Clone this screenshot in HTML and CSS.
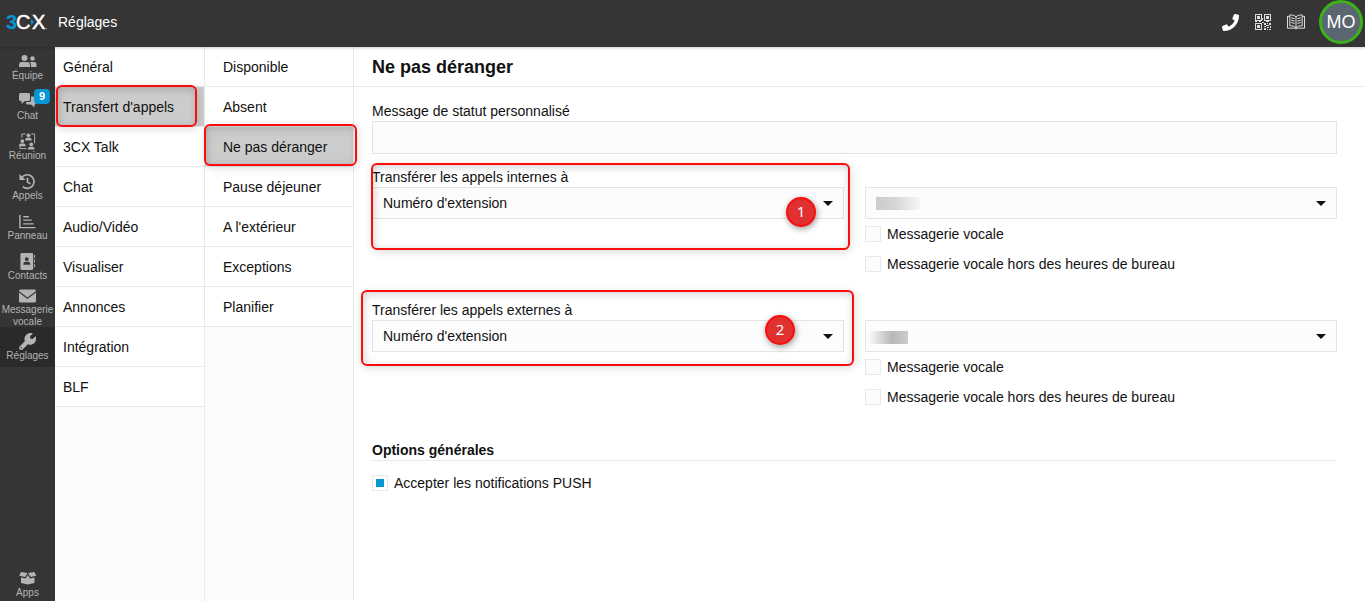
FILE: index.html
```html
<!DOCTYPE html>
<html lang="fr">
<head>
<meta charset="utf-8">
<title>3CX – Réglages</title>
<link rel="stylesheet" href="styles.css">
</head>
<body>
<div class="app">
  <header class="topbar">
    <svg class="logo" viewBox="0 0 44 32" role="img" aria-label="3CX">
      <text class="logo-3" x="0" y="23">3</text>
      <text class="logo-c" x="10" y="23">C</text>
      <text class="logo-c" x="26" y="23">X</text>
      <path d="M25 13l3 3-3 3z" fill="#0596d4"/>
      <rect x="40" y="22" width="1" height="1" fill="#aaa"/>
    </svg>
    <span class="topbar-title">Réglages</span>
    <div class="topbar-actions">
      <button class="icon-button" type="button" aria-label="Téléphone">
        <svg width="17" height="17" viewBox="0 0 512 512" fill="#fff"><path d="M493 25L389 1c-11-3-23 3-27 14l-48 112c-4 10-1 21 7 28l60 50c-36 76-98 139-176 176l-50-60c-7-8-18-11-28-7L15 362c-11 4-17 16-14 27l24 104c3 11 12 19 24 19 256 0 463-207 463-463 0-12-8-21-19-24z"/></svg>
      </button>
      <button class="icon-button" type="button" aria-label="Code QR">
        <svg width="16" height="16" viewBox="0 0 16 16" fill="#ddd"><path fill-rule="evenodd" d="M0 0h7v7H0zM1 1v5h5V1zM9 0h7v7H9zM10 1v5h5V1zM0 9h7v7H0zM1 10v5h5v-5z"/><path d="M2 2h3v3H2zM11 2h3v3h-3zM2 11h3v3H2zM9 9h2v2H9zM12 9h1v1h-1zM14 9h2v2h-2zM11 11h3v1h-3zM9 12h2v1H9zM12 13h2v1h-2zM15 12h1v2h-1zM9 14h2v2H9zM12 15h1v1h-1zM14 15h2v1h-2zM7 4h1v2H7zM7 8h2v1H7zM4 7h2v1H4zM0 7h2v1H0zM11 7h3v1h-3z"/></svg>
      </button>
      <button class="icon-button" type="button" aria-label="Annuaire">
        <svg width="18" height="16" viewBox="0 0 19 16" fill="none" stroke="#eee"><path d="M2.500 2H.5v12.500h7.500l1.500 1 1.500-1h7.500V2h-2M9.500 2.500C8 1 5.500.5 3 .5v11.500c2.500 0 5 .5 6.500 2C11 12.500 13.500 12 16 12V.5c-2.500 0-5 .5-6.500 2zV14"/><path d="M4.500 3.500l3.500 1M4.500 6l3.500 1M4.500 8.500l3.500 1M14.500 3.500L11 4.500M14.500 6L11 7M14.500 8.500L11 9.500"/></svg>
      </button>
      <button class="avatar" type="button">MO</button>
    </div>
  </header>

  <div class="body">
    <nav class="rail" aria-label="Navigation">
      <a class="rail-item" href="#">
        <svg width="18" height="14" viewBox="0 0 18 14"><circle cx="5.500" cy="4" r="3"/><circle cx="13.500" cy="4.500" r="2.300"/><path d="M0 13v-2q0-3 3-3h5q3 0 3 3v2zM12 13v-2q0-2-1.200-3H15q2.500 0 2.500 2.500V13z"/></svg>
        <span>Équipe</span>
      </a>
      <a class="rail-item" href="#">
        <svg width="18" height="15" viewBox="0 0 18 15"><path d="M1.500 0h8Q11 0 11 1.500v5Q11 8 9.500 8H6L2.500 11V8H1.500Q0 8 0 6.500v-5Q0 0 1.500 0z"/><path d="M12 3.500h3.500Q17 3.500 17 5v5q0 1.500-1.500 1.500V14.500l-3.500-3H8.500Q7 11.500 7 10V9h3.500Q12 9 12 7.500z"/></svg>
        <span>Chat</span>
        <span class="badge">9</span>
      </a>
      <a class="rail-item" href="#">
        <svg class="tall" width="17" height="17" viewBox="0 0 18 18"><path d="M7 1h-4v4M13 1h3.500v10M1 13v3.500h7" fill="none" stroke="#b4b4b4"/><circle cx="10" cy="2.500" r="2"/><path d="M6.500 8q0-3 2-3h3q2 0 2 3z"/><circle cx="3.500" cy="8.500" r="2"/><path d="M0 14q0-3 2-3h3q2 0 2 3z"/><circle cx="13" cy="12" r="2"/><path d="M9.500 17.500q0-3 2-3h3q2 0 2 3z"/></svg>
        <span>Réunion</span>
      </a>
      <a class="rail-item" href="#">
        <svg class="tall" width="17" height="17" viewBox="0 0 18 18"><path d="M2.500 5.500A7.200 7.200 0 1 1 4 14.500M9 5v4.500l3 2" fill="none" stroke="#b4b4b4" stroke-width="1.800"/><path d="M.5 1v6.500H7z"/></svg>
        <span>Appels</span>
      </a>
      <a class="rail-item" href="#">
        <svg class="tall" width="17" height="17" viewBox="0 0 18 18"><path d="M1 2v13.500h16.500M4.500 4h6M4.500 7.500h9M4.500 11.500h11" fill="none" stroke="#b4b4b4" stroke-width="1.500"/></svg>
        <span>Panneau</span>
      </a>
      <a class="rail-item" href="#">
        <svg class="tall" width="17" height="17" viewBox="0 0 18 18"><path fill-rule="evenodd" d="M3 0h10.500Q15 0 15 1.500v15q0 1.500-1.500 1.500H3q-1.500 0-1.500-1.500v-15Q1.500 0 3 0zM8.200 4.500a2 2 0 1 0 .1 0zM4.500 12.500h7.500q0-3-2.200-3.200H6.700q-2.200.2-2.200 3.200z"/><path d="M16 2h1v3h-1zM16 7h1v3h-1zM16 12h1v3h-1z"/></svg>
        <span>Contacts</span>
      </a>
      <a class="rail-item two-lines" href="#">
        <svg width="17" height="14" viewBox="0 0 17 14"><path d="M1.500.5h14q1.500 0 1.500 1.500L8.500 8.500 0 2Q0 .5 1.500.5zM0 3.500l8.500 6.500L17 3.500V12q0 1.500-1.500 1.500h-14Q0 13.500 0 12z"/></svg>
        <span>Messagerie vocale</span>
      </a>
      <a class="rail-item current" href="#" aria-current="page">
        <svg class="tall" width="17" height="17" viewBox="0 0 512 512"><path d="M507 117c-2-9-14-12-21-5l-74 74-68-11-11-68 74-74c7-7 4-19-5-21C338-6 268 9 218 59c-53 53-67 130-42 197L19 413c-25 25-25 66 0 91s66 25 91 0l157-157c67 25 144 11 197-42 50-50 61-122 43-188zM64 472c-13 0-24-11-24-24s11-24 24-24 24 11 24 24-11 24-24 24z" transform="translate(0 -6)"/></svg>
        <span>Réglages</span>
      </a>
      <a class="rail-item rail-last" href="#">
        <svg width="18" height="14" viewBox="0 0 18 14"><path d="M2 1l6.500 1L6 6 .3 4.800zM15.500 1L9 2l2.500 4 5.700-1.200zM2 6.500l4.500 1L8.700 4l2.300 3.500 4.500-1V12l-6.700 1.500L2 12z"/></svg>
        <span>Apps</span>
      </a>
    </nav>

    <nav class="menu" aria-label="Réglages">
      <a class="menu-item" href="#">Général</a>
      <a class="menu-item selected" href="#">Transfert d'appels<i class="frame frame-menu"></i></a>
      <a class="menu-item" href="#">3CX Talk</a>
      <a class="menu-item" href="#">Chat</a>
      <a class="menu-item" href="#">Audio/Vidéo</a>
      <a class="menu-item" href="#">Visualiser</a>
      <a class="menu-item" href="#">Annonces</a>
      <a class="menu-item" href="#">Intégration</a>
      <a class="menu-item" href="#">BLF</a>
    </nav>

    <nav class="menu submenu" aria-label="Transfert d'appels">
      <a class="menu-item" href="#">Disponible</a>
      <a class="menu-item" href="#">Absent</a>
      <a class="menu-item selected" href="#">Ne pas déranger<i class="frame frame-submenu"></i></a>
      <a class="menu-item" href="#">Pause déjeuner</a>
      <a class="menu-item" href="#">A l'extérieur</a>
      <a class="menu-item" href="#">Exceptions</a>
      <a class="menu-item" href="#">Planifier</a>
    </nav>

    <main class="content">
      <h1 class="page-title">Ne pas déranger</h1>
      <form class="form">
        <div class="status">
          <label class="label" for="status">Message de statut personnalisé</label>
          <input class="text-input" id="status" type="text">
        </div>

        <div class="forward">
          <div class="field">
            <label class="label" for="internal">Transférer les appels internes à</label>
            <div class="select-wrap">
              <select class="select" id="internal"><option>Numéro d'extension</option></select>
            </div>
            <i class="frame frame-internal"></i>
            <b class="marker marker-internal">1</b>
          </div>
          <div class="target">
            <div class="select-wrap">
              <select class="select" aria-label="Extension interne"><option></option></select>
              <i class="redacted redacted-internal"></i>
            </div>
            <label class="check"><input type="checkbox">Messagerie vocale</label>
            <label class="check"><input type="checkbox">Messagerie vocale hors des heures de bureau</label>
          </div>
        </div>

        <div class="forward">
          <div class="field">
            <label class="label" for="external">Transférer les appels externes à</label>
            <div class="select-wrap">
              <select class="select" id="external"><option>Numéro d'extension</option></select>
            </div>
            <i class="frame frame-external"></i>
            <b class="marker marker-external">2</b>
          </div>
          <div class="target">
            <div class="select-wrap">
              <select class="select" aria-label="Extension externe"><option></option></select>
              <i class="redacted redacted-external"></i>
            </div>
            <label class="check"><input type="checkbox">Messagerie vocale</label>
            <label class="check"><input type="checkbox">Messagerie vocale hors des heures de bureau</label>
          </div>
        </div>

        <h2 class="section-title">Options générales</h2>
        <label class="check"><input type="checkbox" checked>Accepter les notifications PUSH</label>
      </form>
    </main>
  </div>
</div>
</body>
</html>
```
FILE: styles.css
```css
* {
  box-sizing: border-box;
}

body {
  margin: 0;
  font: 14px/20px "Liberation Sans", Arial, sans-serif;
  color: #111;
  background: #fff;
}

a {
  color: inherit;
  text-decoration: none;
}

button,
input,
select {
  font: inherit;
  color: inherit;
}

.app {
  display: flex;
  flex-direction: column;
  height: 100vh;
  overflow: hidden;
}

/* Top bar */
.topbar {
  display: flex;
  flex: none;
  align-items: center;
  height: 47px;
  padding: 0 2px 3px 6px;
  background: #353535;
  color: #fff;
  box-shadow: 0 1px 3px rgba(0, 0, 0, 0.2);
  z-index: 1;
}

.logo {
  width: 44px;
  height: 32px;
  margin-right: 8px;
  overflow: visible;
}

.logo text {
  font-size: 20px;
}

.logo-3 {
  font-weight: 700;
  fill: #0596d4;
}

.logo-c {
  fill: #fff;
  stroke: #fff;
  stroke-width: 0.5;
}

.topbar-actions {
  display: flex;
  align-items: center;
  gap: 16px;
  margin-left: auto;
}

.icon-button {
  display: flex;
  padding: 0;
  border: 0;
  background: none;
}

.avatar {
  width: 44px;
  height: 44px;
  margin-left: -2px;
  padding: 0;
  border: 3px solid #3bb11b;
  border-radius: 50%;
  background: #5a6670;
  color: #fff;
  font-size: 18px;
}

/* Columns */
.body {
  display: flex;
  flex: 1;
  min-height: 0;
}

.rail {
  display: flex;
  flex: none;
  flex-direction: column;
  width: 55px;
  background: #353535;
  color: #b4b4b4;
  font-size: 10px;
  line-height: 12px;
}

.rail-item {
  position: relative;
  display: flex;
  flex: none;
  flex-direction: column;
  align-items: center;
  justify-content: flex-end;
  gap: 2px;
  height: 40px;
  padding-bottom: 5px;
  text-align: center;
}

.rail-item.two-lines {
  justify-content: flex-start;
  gap: 1px;
  padding: 2px 0 0;
}

.rail-item svg {
  flex: none;
  fill: #b4b4b4;
}

.rail-item .tall {
  margin-bottom: -2px;
}

.rail-item.current {
  background: #2a2a2a;
}

.rail-last {
  margin-top: auto;
  margin-bottom: -3px;
}

.badge {
  position: absolute;
  top: 2px;
  left: 34px;
  width: 16px;
  border-radius: 4px;
  background: #0596d4;
  color: #fff;
  font-size: 11px;
  font-weight: 700;
  line-height: 15px;
}

.menu {
  flex: none;
  width: 150px;
  border-right: 1px solid #e9e9e9;
  background: #fcfcfc;
}

.submenu {
  width: 149px;
}

.menu-item {
  position: relative;
  display: block;
  padding: 10px 8px 9px;
  border-bottom: 1px solid #e9e9e9;
  background: #fff;
}

.submenu .menu-item {
  padding-left: 18px;
}

.menu-item.selected {
  background: #ccc;
}

/* Form */
.content {
  flex: 1;
  min-width: 0;
}

.page-title {
  margin: 0;
  padding: 10px 18px 9px;
  border-bottom: 1px solid #e9e9e9;
  font-size: 18px;
}

.form {
  padding: 14px 28px 0 18px;
}

.status {
  margin-bottom: 13px;
}

.label {
  display: block;
}

.text-input {
  display: block;
  width: 100%;
  height: 33px;
  padding: 0 10px;
  border: 1px solid #e4e4e4;
  background: #fcfcfc;
}

.forward {
  display: grid;
  grid-template-columns: 1fr 1fr;
  gap: 21px;
  margin-bottom: 21px;
}

.field {
  position: relative;
}

.target {
  padding-top: 20px;
}

.select-wrap {
  position: relative;
}

.select-wrap::after {
  content: "";
  position: absolute;
  top: 14px;
  right: 11px;
  border: 5px solid transparent;
  border-top-color: #111;
  border-bottom: 0;
  pointer-events: none;
}

.select {
  display: block;
  width: 100%;
  height: 32px;
  padding: 0 10px;
  border: 1px solid #e4e4e4;
  border-radius: 0;
  appearance: none;
  background: #fcfcfc;
}

.check {
  display: flex;
  align-items: center;
  gap: 6px;
  height: 30px;
}

.check input {
  width: 16px;
  height: 16px;
  margin: 0;
  border: 1px solid #e9e9e9;
  appearance: none;
  background: #fcfcfc;
}

.check input:checked {
  padding: 3px;
  background: #0596d4 content-box;
}

.section-title {
  margin: 28px 0 7px;
  border-bottom: 1px solid #e9e9e9;
  font-size: 14px;
}

/* Masked values */
.redacted {
  position: absolute;
  height: 13px;
  pointer-events: none;
}

.redacted-internal {
  top: 10px;
  left: 11px;
  width: 44px;
  background: linear-gradient(90deg, #ccc, #d4d4d4 40%, #f6f6f6);
}

.redacted-external {
  top: 11px;
  left: 3px;
  width: 40px;
  background: linear-gradient(90deg, #fcfcfc, #b8b8b8 60%, #ccc);
}

/* Annotations */
.frame {
  position: absolute;
  z-index: 2;
  border: 2px solid #fb0d0d;
  border-radius: 6px;
  box-shadow: 1px 2px 8px rgba(0, 0, 0, 0.14), inset 1px 2px 8px rgba(0, 0, 0, 0.18);
  pointer-events: none;
}

.frame-menu {
  inset: -2px 7px -1px 1px;
}

.frame-submenu {
  inset: -3px -4px 0 -1px;
}

.frame-internal {
  inset: -4px -6px 29px -1px;
}

.frame-external {
  inset: -10px -10px 46px -11px;
}

.marker {
  position: absolute;
  z-index: 3;
  width: 30px;
  height: 30px;
  border: 2px solid #fb0d0d;
  border-radius: 50%;
  background: #e03030;
  box-shadow: 1px 2px 6px rgba(0, 0, 0, 0.4);
  color: #fff;
  font: 15px/25px "Noto Sans", sans-serif;
  text-align: center;
}

.marker-internal {
  top: 30px;
  right: 28px;
}

.marker-external {
  top: 15px;
  right: 49px;
}
```
